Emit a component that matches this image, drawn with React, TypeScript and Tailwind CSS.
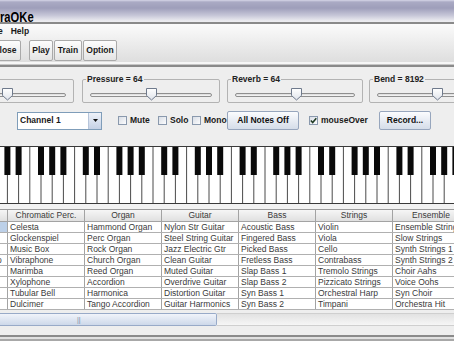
import React from 'react';

const columns = [
  { name: 'Chromatic Perc.', items: ['Celesta', 'Glockenspiel', 'Music Box', 'Vibraphone', 'Marimba', 'Xylophone', 'Tubular Bell', 'Dulcimer'] },
  { name: 'Organ', items: ['Hammond Organ', 'Perc Organ', 'Rock Organ', 'Church Organ', 'Reed Organ', 'Accordion', 'Harmonica', 'Tango Accordion'] },
  { name: 'Guitar', items: ['Nylon Str Guitar', 'Steel String Guitar', 'Jazz Electric Gtr', 'Clean Guitar', 'Muted Guitar', 'Overdrive Guitar', 'Distortion Guitar', 'Guitar Harmonics'] },
  { name: 'Bass', items: ['Acoustic Bass', 'Fingered Bass', 'Picked Bass', 'Fretless Bass', 'Slap Bass 1', 'Slap Bass 2', 'Syn Bass 1', 'Syn Bass 2'] },
  { name: 'Strings', items: ['Violin', 'Viola', 'Cello', 'Contrabass', 'Tremolo Strings', 'Pizzicato Strings', 'Orchestral Harp', 'Timpani'] },
  { name: 'Ensemble', items: ['Ensemble Strings', 'Slow Strings', 'Synth Strings 1', 'Synth Strings 2', 'Choir Aahs', 'Voice Oohs', 'Syn Choir', 'Orchestra Hit'] },
];

function ToolButton({ label, className = '' }: { label: string; className?: string }) {
  return (
    <div className={`flex h-[21px] shrink-0 items-center justify-center rounded-[2px] border border-[#a9a9a9] bg-gradient-to-b from-[#fdfdfd] to-[#e4e4e4] text-[8.5px] font-bold text-[#1a1a1a] ${className}`}>
      {label}
    </div>
  );
}

function SliderPanel({ title, frac, className = '' }: { title?: string; frac: number; className?: string }) {
  return (
    <div className={`relative h-[24px] shrink-0 rounded-[2px] border border-[#b3b3b3] px-[7px] pt-[13px] ${className}`}>
      {title && (
        <span className="absolute left-[3px] top-[-6px] bg-[#eeeeee] px-[1px] text-[8.5px] font-bold leading-[10px] text-[#222]">
          {title}
        </span>
      )}
      <div className="relative h-[4px] rounded-[2px] border border-[#8f8f8f] bg-gradient-to-b from-[#d8d8d8] to-[#fafafa]">
        <svg
          className="absolute top-[-6px]"
          style={{ left: `calc(${frac * 100}% - 6px)` }}
          width="11"
          height="13"
          viewBox="0 0 11 13"
        >
          <defs>
            <linearGradient id="th" x1="0" y1="0" x2="0" y2="1">
              <stop offset="0" stopColor="#ffffff" />
              <stop offset="1" stopColor="#dfe3ea" />
            </linearGradient>
          </defs>
          <path d="M0.5 0.5 H10.5 V7.5 L5.5 12 L0.5 7.5 Z" fill="url(#th)" stroke="#6f7a8c" />
        </svg>
      </div>
    </div>
  );
}

function Check({ label, checked = false, className = '' }: { label: string; checked?: boolean; className?: string }) {
  return (
    <div className={`flex shrink-0 items-center ${className}`}>
      <div className="flex h-[9px] w-[9px] items-center justify-center border border-[#8a99ad] bg-gradient-to-br from-[#d9dee6] to-[#fcfcfd]">
        {checked && (
          <svg width="7" height="7" viewBox="0 0 7 7">
            <path d="M0.8 3.5 L2.7 5.5 L6.3 1.2" fill="none" stroke="#1f3a22" strokeWidth="1.5" />
          </svg>
        )}
      </div>
      <span className="ml-[3px] text-[8.5px] font-bold text-[#1a1a1a]">{label}</span>
    </div>
  );
}

function Piano() {
  const kw = 11.2;
  const x0 = -3.8;
  const whites = Array.from({ length: 42 }, (_, i) => i);
  return (
    <svg width="454" height="58" className="block">
      <rect x="0" y="0" width="454" height="58" fill="#ffffff" />
      {whites.map((i) => (
        <line key={`w${i}`} x1={x0 + i * kw} y1="0" x2={x0 + i * kw} y2="58" stroke="#4a4a4a" strokeWidth="1" />
      ))}
      {whites
        .filter((i) => [0, 1, 3, 4, 5].includes(i % 7))
        .map((i) => (
          <rect key={`b${i}`} x={x0 + (i + 1) * kw - 3} y="0" width="6" height="29" fill="#0a0a0a" />
        ))}
      <line x1="0" y1="0.5" x2="454" y2="0.5" stroke="#3a3a3a" />
      <line x1="0" y1="57.5" x2="454" y2="57.5" stroke="#3a3a3a" />
    </svg>
  );
}

export default function App() {
  return (
    <div className="h-[341px] w-[454px] overflow-hidden bg-[#eeeeee] font-['Liberation_Sans',Arial,sans-serif]">
      {/* title bar */}
      <div className="h-[22px] bg-[linear-gradient(to_bottom,#d6d6e8_0px,#aaaac4_2px,#9e9eba_8px,#c4c4d6_15px,#ececf0_21px)] pt-[5px]">
        <span className="inline-block origin-left scale-x-[0.8] text-[14px] font-bold leading-[16px] text-black">raOKe</span>
      </div>
      <div className="h-[2px] bg-[#8a8a8a]" />

      {/* menu + toolbar */}
      <div className="h-[38px] bg-gradient-to-b from-[#fbfbfb] to-[#dedede]">
        <div className="flex h-[14px] items-center text-[8.5px] font-bold text-[#1a1a1a]">
          <span className="ml-[-12px]">File</span>
          <span className="ml-[8px]">Help</span>
        </div>
        <div className="flex pt-[2px]">
          <ToolButton label="Close" className="ml-[-11px] w-[32px]" />
          <ToolButton label="Play" className="ml-[8px] w-[24px]" />
          <ToolButton label="Train" className="ml-[1px] w-[28px]" />
          <ToolButton label="Option" className="ml-[1px] w-[34px]" />
        </div>
      </div>
      <div className="h-[2px] bg-[#f6f6f6]" />
      <div className="h-[1px] bg-[#c6c6c6]" />
      <div className="h-[2px] bg-[#8a8a8a]" />

      {/* sliders */}
      <div className="mt-[12px] flex">
        <SliderPanel frac={0.52} className="ml-[-63px] w-[137px]" />
        <SliderPanel title="Pressure = 64" frac={0.51} className="ml-[8px] w-[138px]" />
        <SliderPanel title="Reverb = 64" frac={0.52} className="ml-[7px] w-[136px]" />
        <SliderPanel title="Bend = 8192" frac={0.5} className="ml-[6px] w-[137px]" />
      </div>

      {/* controls row */}
      <div className="mt-[8px] flex h-[19px] items-center">
        <div className="ml-[17px] flex h-[18px] w-[85px] shrink-0 items-center border border-[#7f9db9] bg-white">
          <span className="flex-1 pl-[2px] text-[8.5px] font-bold text-[#1a1a1a]">Channel 1</span>
          <div className="flex h-full w-[13px] items-center justify-center border-l border-[#b7c5da] bg-gradient-to-b from-[#eef2f9] to-[#c5d1e5]">
            <svg width="5" height="3" viewBox="0 0 5 3">
              <path d="M0 0 H5 L2.5 3 Z" fill="#111" />
            </svg>
          </div>
        </div>
        <Check label="Mute" className="ml-[16px] w-[40px]" />
        <Check label="Solo" className="w-[34px]" />
        <Check label="Mono" className="w-[35px]" />
        <div className="flex h-[19px] w-[72px] shrink-0 items-center justify-center rounded-[2px] border border-[#97a6bd] bg-gradient-to-b from-[#fbfcfe] to-[#d5dde9] text-[8.5px] font-bold text-[#111]">
          All Notes Off
        </div>
        <Check label="mouseOver" checked className="ml-[10px] w-[70px]" />
        <div className="flex h-[19px] w-[52px] shrink-0 items-center justify-center rounded-[2px] border border-[#97a6bd] bg-gradient-to-b from-[#fbfcfe] to-[#d5dde9] text-[8.5px] font-bold text-[#111]">
          Record...
        </div>
      </div>

      {/* keyboard */}
      <div className="mt-[16px]">
        <Piano />
      </div>
      <div className="h-[5px] bg-[#f2f2f2]" />

      {/* instrument table */}
      <div className="border-t border-[#9a9a9a]">
        <div className="flex h-[12px] border-b border-[#a3a3a3] bg-gradient-to-b from-[#f6f6f6] to-[#e0e0e0] text-[8.5px] leading-[11px] text-[#3a3a3a]">
          <div className="w-[8px] shrink-0 border-r border-[#a3a3a3]" />
          {columns.map((c) => (
            <div key={c.name} className="w-[77px] shrink-0 border-r border-[#a3a3a3] text-center">
              {c.name}
            </div>
          ))}
        </div>
        {columns[0].items.map((_, r) => (
          <div key={r} className="flex h-[11px] border-b border-[#b0b0b0] bg-white text-[8.5px] leading-[10px] text-[#3a3a3a]">
            <div className={`w-[8px] shrink-0 overflow-hidden whitespace-nowrap border-r border-[#a3a3a3] ${r === 0 ? 'bg-[#bcd0e8]' : ''}`}>
              {r === 3 && <span className="ml-[-3px]">o</span>}
            </div>
            {columns.map((c) => (
              <div key={c.name} className="w-[77px] shrink-0 overflow-hidden whitespace-nowrap border-r border-[#a3a3a3] pl-[2px]">
                {c.items[r]}
              </div>
            ))}
          </div>
        ))}
      </div>

      {/* horizontal scrollbar */}
      <div className="mt-[3px] flex h-[13px]">
        <div className="relative flex w-[217px] shrink-0 items-center rounded-r-[2px] border border-l-0 border-[#98aac8] bg-gradient-to-b from-[#f1f4fa] to-[#cdd8ea]">
          <span className="ml-[77px] text-[7px] leading-[8px] text-[#7a8aa4]">||</span>
        </div>
        <div className="flex-1 border-y border-[#cfcfcf] bg-gradient-to-b from-[#e2e2e2] to-[#f6f6f6]" />
      </div>
      <div className="h-[9px]" />
      <div className="h-[2px] bg-[#8a8a8a]" />
      <div className="h-[2px] bg-[#e0e0e0]" />
      <div className="h-[4px] bg-[#a8a8a8]" />
    </div>
  );
}
